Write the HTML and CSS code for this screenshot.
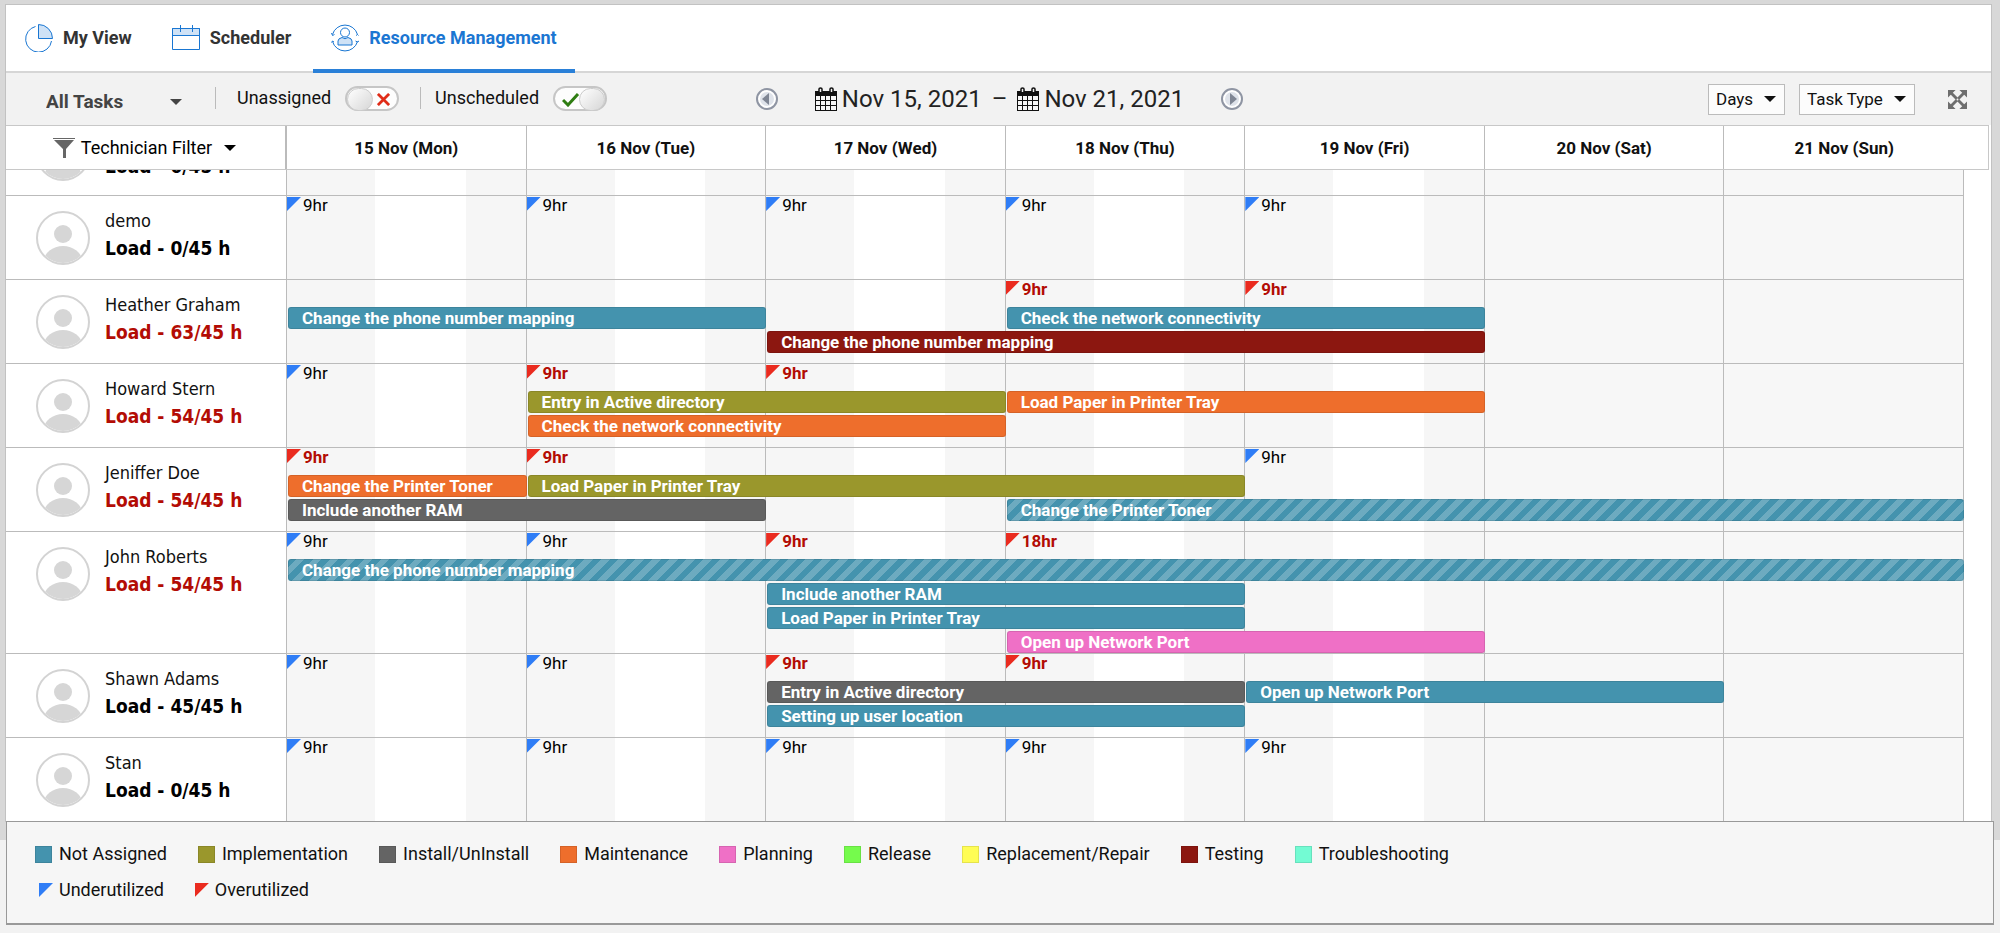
FILE: index.html
```html
<!DOCTYPE html>
<html lang="en">
<head>
<meta charset="utf-8">
<title>Resource Management</title>
<link rel="stylesheet" href="styles.css">
</head>
<body>
<svg class="sprite" aria-hidden="true">
  <symbol id="avatar" viewBox="0 0 54 54">
    <clipPath id="avatar-clip"><circle cx="27" cy="27" r="25"/></clipPath>
    <circle cx="27" cy="27" r="26" fill="#fff" stroke="#d3d3d3" stroke-width="2"/>
    <circle cx="27" cy="23" r="9" fill="#d6d6d6"/>
    <ellipse cx="27" cy="50" rx="19" ry="15" fill="#d6d6d6" clip-path="url(#avatar-clip)"/>
  </symbol>
  <symbol id="caret" viewBox="0 0 12 6"><path d="M0 0h12L6 6z" fill="currentColor"/></symbol>
  <symbol id="calendar" viewBox="0 0 22 24">
    <path d="M0 4h22v20H0z" fill="#111"/>
    <path d="M4 5V2q0-1 1.500-1T7 2v3M15 5V2q0-1 1.500-1T18 2v3" fill="#f2f2f2" stroke="#111" stroke-width="1.500"/>
    <path d="M1 9h4v4H1zM6 9h4v4H6zM11 9h4v4h-4zM16 9h5v4h-5zM1 14h4v4H1zM6 14h4v4H6zM11 14h4v4h-4zM16 14h5v4h-5zM1 19h4v4H1zM6 19h4v4H6zM11 19h4v4h-4zM16 19h5v4h-5z" fill="#f6f6f6"/>
  </symbol>
  <symbol id="step" viewBox="0 0 22 22">
    <circle cx="11" cy="11" r="10" fill="#fff" stroke="#8f95a3" stroke-width="2"/>
    <circle cx="11" cy="11" r="7" fill="#dfe3ea"/>
    <path d="M6 11l7-6v12z" fill="#7f8694"/>
  </symbol>
</svg>

<div class="backdrop">
<main class="panel">
  <nav class="tabs">
    <a class="tab" href="#my-view">
      <svg class="tab-icon" viewBox="0 0 28 28" fill="none" stroke="#1976d2"><path d="M10.500 2.500A13 13 0 1 0 26.500 17"/><path d="M13.500 .500v14h14A14 14 0 0 0 13.500 .500z" fill="#cfe2f6"/></svg>
      My View
    </a>
    <a class="tab" href="#scheduler">
      <svg class="tab-icon" viewBox="0 0 28 28" fill="none" stroke="#1976d2"><path d="M.500 4.500h27v7H.500z" fill="#cfe2f6"/><path d="M.500 4.500h27v21H.500zM8.500 1v7M20.500 1v7"/></svg>
      Scheduler
    </a>
    <a class="tab tab-active" href="#resources" aria-current="page">
      <svg class="tab-icon" viewBox="0 0 28 28" fill="none" stroke="#1976d2"><path d="M1.500 10.500A13 13 0 0 1 26.500 10.500M26.500 17.500A13 13 0 0 1 1.500 17.500M.500 9l1 2.500 2-1M27.500 11.500l-1-1-1.500 1M.500 18.500l1-1.500 1.500 1M28 17l-1.500 1-2-1"/><circle cx="14" cy="8.500" r="4.500"/><path d="M7 21v-4q0-2.500 4-3.500 3 2.500 6 0 4 1 4 3.500v4z" fill="#cfe2f6"/></svg>
      Resource Management
    </a>
  </nav>

  <div class="toolbar">
    <div class="filters">
      <label class="select select-plain">
        <select aria-label="Tasks"><option>All Tasks</option></select>
        <svg class="caret"><use href="#caret"/></svg>
      </label>
      <label class="switch">Unassigned
        <span class="toggle"><input type="checkbox">
          <svg class="mark" viewBox="0 0 14 14"><path d="M1 1l12 12M13 1L1 13" stroke="#e02c18" stroke-width="3"/></svg></span>
      </label>
      <label class="switch">Unscheduled
        <span class="toggle"><input type="checkbox" checked>
          <svg class="mark" viewBox="0 0 18 14"><path d="M1 7l5 5L16 1" fill="none" stroke="#2f7d12" stroke-width="3"/></svg></span>
      </label>
    </div>
    <div class="range">
      <button class="step" aria-label="Previous week"><svg><use href="#step"/></svg></button>
      <div class="dates">
        <button class="date"><svg><use href="#calendar"/></svg>Nov 15, 2021</button>
        <span>–</span>
        <button class="date"><svg><use href="#calendar"/></svg>Nov 21, 2021</button>
      </div>
      <button class="step step-next" aria-label="Next week"><svg><use href="#step"/></svg></button>
    </div>
    <div class="view-options">
      <label class="select select-boxed">
        <select aria-label="Scale"><option>Days</option></select>
        <svg class="caret"><use href="#caret"/></svg>
      </label>
      <label class="select select-boxed">
        <select aria-label="Group by"><option>Task Type</option></select>
        <svg class="caret"><use href="#caret"/></svg>
      </label>
      <button class="expand" aria-label="Full screen">
        <svg viewBox="0 0 20 20" fill="#6e6e6e"><path d="M3 3l14 14M17 3L3 17" stroke="#6e6e6e" stroke-width="3"/><path d="M0 0h8L0 8zM20 0v8l-8-8zM0 20v-8l8 8zM20 20h-8l8-8z"/><circle cx="10" cy="10" r="1" fill="#f2f2f2"/></svg>
      </button>
    </div>
  </div>

  <div class="head">
    <button class="tech-filter">
      <svg class="funnel" viewBox="0 0 22 20" fill="#666"><path d="M0 0h22v1H0zM1 2h20l-8 9v9h-3v-9z"/></svg>
      Technician Filter
      <svg class="caret"><use href="#caret"/></svg>
    </button>
    <div class="head-days">
      <div>15 Nov (Mon)</div><div>16 Nov (Tue)</div><div>17 Nov (Wed)</div><div>18 Nov (Thu)</div><div>19 Nov (Fri)</div><div>20 Nov (Sat)</div><div>21 Nov (Sun)</div>
    </div>
  </div>

  <div class="schedule">
    <section class="row row-scrolled">
      <div class="tech"><svg class="avatar"><use href="#avatar"/></svg><div><p class="load">Load - 0/45 h</p></div></div>
      <div class="lane"><i class="day c1"></i><i class="day c2"></i><i class="day c3"></i><i class="day c4"></i><i class="day c5"></i><i class="day off c6"></i><i class="day off c7"></i></div>
    </section>

    <section class="row">
      <div class="tech"><svg class="avatar"><use href="#avatar"/></svg><div><p class="name">demo</p><p class="load">Load - 0/45 h</p></div></div>
      <div class="lane"><i class="day c1"></i><i class="day c2"></i><i class="day c3"></i><i class="day c4"></i><i class="day c5"></i><i class="day off c6"></i><i class="day off c7"></i>
        <span class="flag c1">9hr</span><span class="flag c2">9hr</span><span class="flag c3">9hr</span><span class="flag c4">9hr</span><span class="flag c5">9hr</span>
      </div>
    </section>

    <section class="row">
      <div class="tech"><svg class="avatar"><use href="#avatar"/></svg><div><p class="name">Heather Graham</p><p class="load load-over">Load - 63/45 h</p></div></div>
      <div class="lane"><i class="day c1"></i><i class="day c2"></i><i class="day c3"></i><i class="day c4"></i><i class="day c5"></i><i class="day off c6"></i><i class="day off c7"></i>
        <span class="flag over c4">9hr</span><span class="flag over c5">9hr</span>
        <div class="task not-assigned r1 c1 w2">Change the phone number mapping</div>
        <div class="task not-assigned r1 c4 w2">Check the network connectivity</div>
        <div class="task testing r2 c3 w3">Change the phone number mapping</div>
      </div>
    </section>

    <section class="row">
      <div class="tech"><svg class="avatar"><use href="#avatar"/></svg><div><p class="name">Howard Stern</p><p class="load load-over">Load - 54/45 h</p></div></div>
      <div class="lane"><i class="day c1"></i><i class="day c2"></i><i class="day c3"></i><i class="day c4"></i><i class="day c5"></i><i class="day off c6"></i><i class="day off c7"></i>
        <span class="flag c1">9hr</span><span class="flag over c2">9hr</span><span class="flag over c3">9hr</span>
        <div class="task implementation r1 c2 w2">Entry in Active directory</div>
        <div class="task maintenance r1 c4 w2">Load Paper in Printer Tray</div>
        <div class="task maintenance r2 c2 w2">Check the network connectivity</div>
      </div>
    </section>

    <section class="row">
      <div class="tech"><svg class="avatar"><use href="#avatar"/></svg><div><p class="name">Jeniffer Doe</p><p class="load load-over">Load - 54/45 h</p></div></div>
      <div class="lane"><i class="day c1"></i><i class="day c2"></i><i class="day c3"></i><i class="day c4"></i><i class="day c5"></i><i class="day off c6"></i><i class="day off c7"></i>
        <span class="flag over c1">9hr</span><span class="flag over c2">9hr</span><span class="flag c5">9hr</span>
        <div class="task maintenance r1 c1 w1">Change the Printer Toner</div>
        <div class="task implementation r1 c2 w3">Load Paper in Printer Tray</div>
        <div class="task install r2 c1 w2">Include another RAM</div>
        <div class="task not-assigned striped r2 c4 w4">Change the Printer Toner</div>
      </div>
    </section>

    <section class="row">
      <div class="tech"><svg class="avatar"><use href="#avatar"/></svg><div><p class="name">John Roberts</p><p class="load load-over">Load - 54/45 h</p></div></div>
      <div class="lane lane-tall"><i class="day c1"></i><i class="day c2"></i><i class="day c3"></i><i class="day c4"></i><i class="day c5"></i><i class="day off c6"></i><i class="day off c7"></i>
        <span class="flag c1">9hr</span><span class="flag c2">9hr</span><span class="flag over c3">9hr</span><span class="flag over c4">18hr</span>
        <div class="task not-assigned striped r1 c1 w7">Change the phone number mapping</div>
        <div class="task not-assigned r2 c3 w2">Include another RAM</div>
        <div class="task not-assigned r3 c3 w2">Load Paper in Printer Tray</div>
        <div class="task planning r4 c4 w2">Open up Network Port</div>
      </div>
    </section>

    <section class="row">
      <div class="tech"><svg class="avatar"><use href="#avatar"/></svg><div><p class="name">Shawn Adams</p><p class="load">Load - 45/45 h</p></div></div>
      <div class="lane"><i class="day c1"></i><i class="day c2"></i><i class="day c3"></i><i class="day c4"></i><i class="day c5"></i><i class="day off c6"></i><i class="day off c7"></i>
        <span class="flag c1">9hr</span><span class="flag c2">9hr</span><span class="flag over c3">9hr</span><span class="flag over c4">9hr</span>
        <div class="task install r1 c3 w2">Entry in Active directory</div>
        <div class="task not-assigned r1 c5 w2">Open up Network Port</div>
        <div class="task not-assigned r2 c3 w2">Setting up user location</div>
      </div>
    </section>

    <section class="row">
      <div class="tech"><svg class="avatar"><use href="#avatar"/></svg><div><p class="name">Stan</p><p class="load">Load - 0/45 h</p></div></div>
      <div class="lane"><i class="day c1"></i><i class="day c2"></i><i class="day c3"></i><i class="day c4"></i><i class="day c5"></i><i class="day off c6"></i><i class="day off c7"></i>
        <span class="flag c1">9hr</span><span class="flag c2">9hr</span><span class="flag c3">9hr</span><span class="flag c4">9hr</span><span class="flag c5">9hr</span>
      </div>
    </section>
  </div>
</main>
</div>

<footer class="legend">
  <ul class="keys">
    <li><i class="swatch not-assigned"></i>Not Assigned</li>
    <li><i class="swatch implementation"></i>Implementation</li>
    <li><i class="swatch install"></i>Install/UnInstall</li>
    <li><i class="swatch maintenance"></i>Maintenance</li>
    <li><i class="swatch planning"></i>Planning</li>
    <li><i class="swatch release"></i>Release</li>
    <li><i class="swatch replacement"></i>Replacement/Repair</li>
    <li><i class="swatch testing"></i>Testing</li>
    <li><i class="swatch troubleshooting"></i>Troubleshooting</li>
  </ul>
  <ul class="keys keys-flags">
    <li><i class="corner"></i>Underutilized</li>
    <li><i class="corner corner-over"></i>Overutilized</li>
  </ul>
</footer>
</body>
</html>
```
FILE: styles.css
```css
* { box-sizing: border-box; }

body {
  margin: 0;
  background: #f2f2f2;
  color: #111;
  font: 18px/24px Roboto, "Liberation Sans", sans-serif;
}

p, ul { margin: 0; padding: 0; }
button, select { font: inherit; color: inherit; border: 0; background: none; padding: 0; margin: 0; }
svg { display: block; flex: none; }
.sprite { position: absolute; width: 0; height: 0; }

.backdrop { background: #d8d8d8; padding: 4px 8px 18px 5px; }
.panel { background: #fff; border: 1px solid #c2c2c2; border-bottom: 0; }

/* Tabs */
.tabs { display: flex; gap: 4px; height: 68px; padding-left: 1px; border-bottom: 2px solid #d6d6d6; }
.tab {
  display: flex; align-items: center; gap: 10px;
  height: 68px; padding: 2px 18px 0;
  border-bottom: 4px solid transparent;
  color: #333; font-weight: 700; text-decoration: none;
}
.tab-icon { width: 28px; height: 28px; }
.tab-active { color: #1b76d2; border-bottom-color: #2a80d8; }

/* Toolbar */
.toolbar {
  display: grid; grid-template-columns: 1fr auto 1fr; align-items: center;
  height: 52px; padding: 0 24px;
  background: #f2f2f2;
}
.filters { display: flex; align-items: center; }
.caret { width: 12px; height: 6px; }
.select { position: relative; display: flex; align-items: center; }
.select select { appearance: none; outline: 0; width: 100%; }
.select .caret { position: absolute; right: 8px; pointer-events: none; }
.select-plain { width: 144px; height: 28px; margin: 6px 25px 0 16px; color: #444; font-size: 19px; font-weight: 700; }
.select-boxed { height: 31px; border: 1px solid #bbb; background: #fcfcfc; }
.select-boxed select { padding: 0 30px 0 7px; font-size: 17px; }

.switch { display: flex; align-items: center; gap: 14px; padding-bottom: 2px; }
.switch::before { content: ""; width: 1px; height: 22px; margin-right: 7px; background: #bbb; }
.switch + .switch { margin-left: 21px; }
.switch + .switch::before { margin-right: 0; }
.toggle { position: relative; display: flex; }
.toggle input {
  appearance: none; display: flex; margin: 0;
  width: 54px; height: 25px;
  border: 2px solid #c6c6c6; border-radius: 13px;
  background: #fdfdfd;
}
.toggle input::before {
  content: ""; width: 24px; height: 21px;
  border-radius: 12px; border: 1px solid #ccc;
  background: linear-gradient(135deg, #fff, #d6d6d6);
}
.toggle input:checked { justify-content: flex-end; }
.mark { position: absolute; top: 7px; right: 9px; width: 13px; height: 13px; }
.toggle input:checked + .mark { right: auto; left: 9px; width: 18px; height: 14px; }

.range { display: flex; align-items: center; gap: 37px; padding-left: 2px; }
.step svg { width: 22px; height: 22px; }
.step-next svg { transform: rotate(180deg); }
.dates { display: flex; align-items: center; gap: 10px; font-size: 24px; color: #222; }
.date { display: flex; align-items: center; gap: 5px; }
.date svg { width: 22px; height: 24px; }

.view-options { display: flex; align-items: center; justify-content: flex-end; gap: 14px; }
.expand { margin-left: 19px; }
.expand svg { width: 19px; height: 19px; }

/* Column headings */
.head {
  display: flex; height: 45px; margin-right: 2px;
  border: solid #c8c8c8; border-width: 1px 1px 1px 0;
}
.tech-filter {
  display: flex; align-items: center; justify-content: center; gap: 6px;
  width: 281px; flex: none; padding-right: 2px; color: #000;
  border-right: 2px solid #bbb;
}
.tech-filter .caret { margin-left: 6px; }
.funnel { width: 22px; height: 20px; }
.head-days { flex: 1; display: grid; grid-template-columns: repeat(7, 1fr); margin-right: 24px; font-size: 17px; font-weight: 700; }
.head-days div { display: flex; align-items: center; justify-content: center; border-right: 1px solid #bbb; }
.head-days div:last-child { border-right: 0; }

/* Schedule */
.schedule { overflow: hidden; }
.row { display: flex; padding-right: 27px; }
.row-scrolled { margin-top: -58px; }
.row-scrolled .load { margin-top: 22px; }
.tech {
  display: flex; gap: 15px; flex: none;
  width: 281px; padding: 15px 0 0 30px;
  border: solid #bbb; border-width: 0 1px 1px 0;
}
.avatar { width: 54px; height: 54px; }
.name { font: 18px/20px "DejaVu Sans Condensed", "DejaVu Sans", sans-serif; }
.load { font: 700 19px/34px "DejaVu Sans Condensed", "DejaVu Sans", sans-serif; color: #000; }
.load-over { color: #b30c04; }

.lane {
  flex: 1; display: grid; row-gap: 2px;
  grid-template: 25px 22px 22px 1fr / repeat(7, 1fr);
  min-height: 84px;
  border-bottom: 1px solid #bbb;
}
.lane-tall { grid-template-rows: 25px 22px 22px 22px 22px; }
.day {
  grid-row: 1 / -1;
  border-right: 1px solid #bbb;
  background: linear-gradient(90deg, #f6f6f6 37%, #fff 37% 75%, #f6f6f6 75%);
}
.off { background: #f7f7f7; }

.flag { grid-row: 1; display: flex; gap: 2px; padding-top: 1px; font-size: 17px; line-height: 16px; color: #000; }
.flag::before, .corner { content: ""; width: 14px; height: 14px; background: #2f7df6; clip-path: polygon(0 0, 100% 0, 0 100%); }
.over { color: #b30c04; font-weight: 700; }
.over::before, .corner-over { background: #ea2b1f; }

.task {
  margin-left: 1px; padding-left: 14px;
  border-radius: 3px;
  color: #fff; font-size: 17px; font-weight: 700; line-height: 22px;
  white-space: nowrap;
  box-shadow: inset 0 0 0 1px #0000001a;
}
.striped { background-image: repeating-linear-gradient(135deg, transparent 0 6px, #ffffff38 6px 12px); }

.not-assigned { background-color: #4493ae; }
.implementation { background-color: #9a972c; }
.install { background-color: #646464; }
.maintenance { background-color: #ee6e2c; }
.planning { background-color: #ef70c6; }
.release { background-color: #75fb4c; }
.replacement { background-color: #fffd55; }
.testing { background-color: #8c1710; }
.troubleshooting { background-color: #73fbd3; }

.r1 { grid-row: 2; } .r2 { grid-row: 3; } .r3 { grid-row: 4; } .r4 { grid-row: 5; }
.c1 { grid-column-start: 1; } .c2 { grid-column-start: 2; } .c3 { grid-column-start: 3; } .c4 { grid-column-start: 4; }
.c5 { grid-column-start: 5; } .c6 { grid-column-start: 6; } .c7 { grid-column-start: 7; }
.w2 { grid-column-end: span 2; } .w3 { grid-column-end: span 3; } .w4 { grid-column-end: span 4; } .w7 { grid-column-end: span 7; }

/* Legend */
.legend {
  position: relative; margin: -19px 6px 0;
  padding: 20px 28px 21px;
  border: 1px solid #999; border-bottom-width: 2px;
  background: #f6f6f6;
}
.keys { display: flex; flex-wrap: wrap; gap: 0 31px; list-style: none; }
.keys li { display: flex; align-items: center; gap: 7px; }
.keys-flags { margin-top: 12px; padding: 0 0 0 4px; }
.keys-flags li { gap: 6px; }
.swatch { width: 17px; height: 17px; box-shadow: inset 0 0 0 1px #0000001a; }
```
